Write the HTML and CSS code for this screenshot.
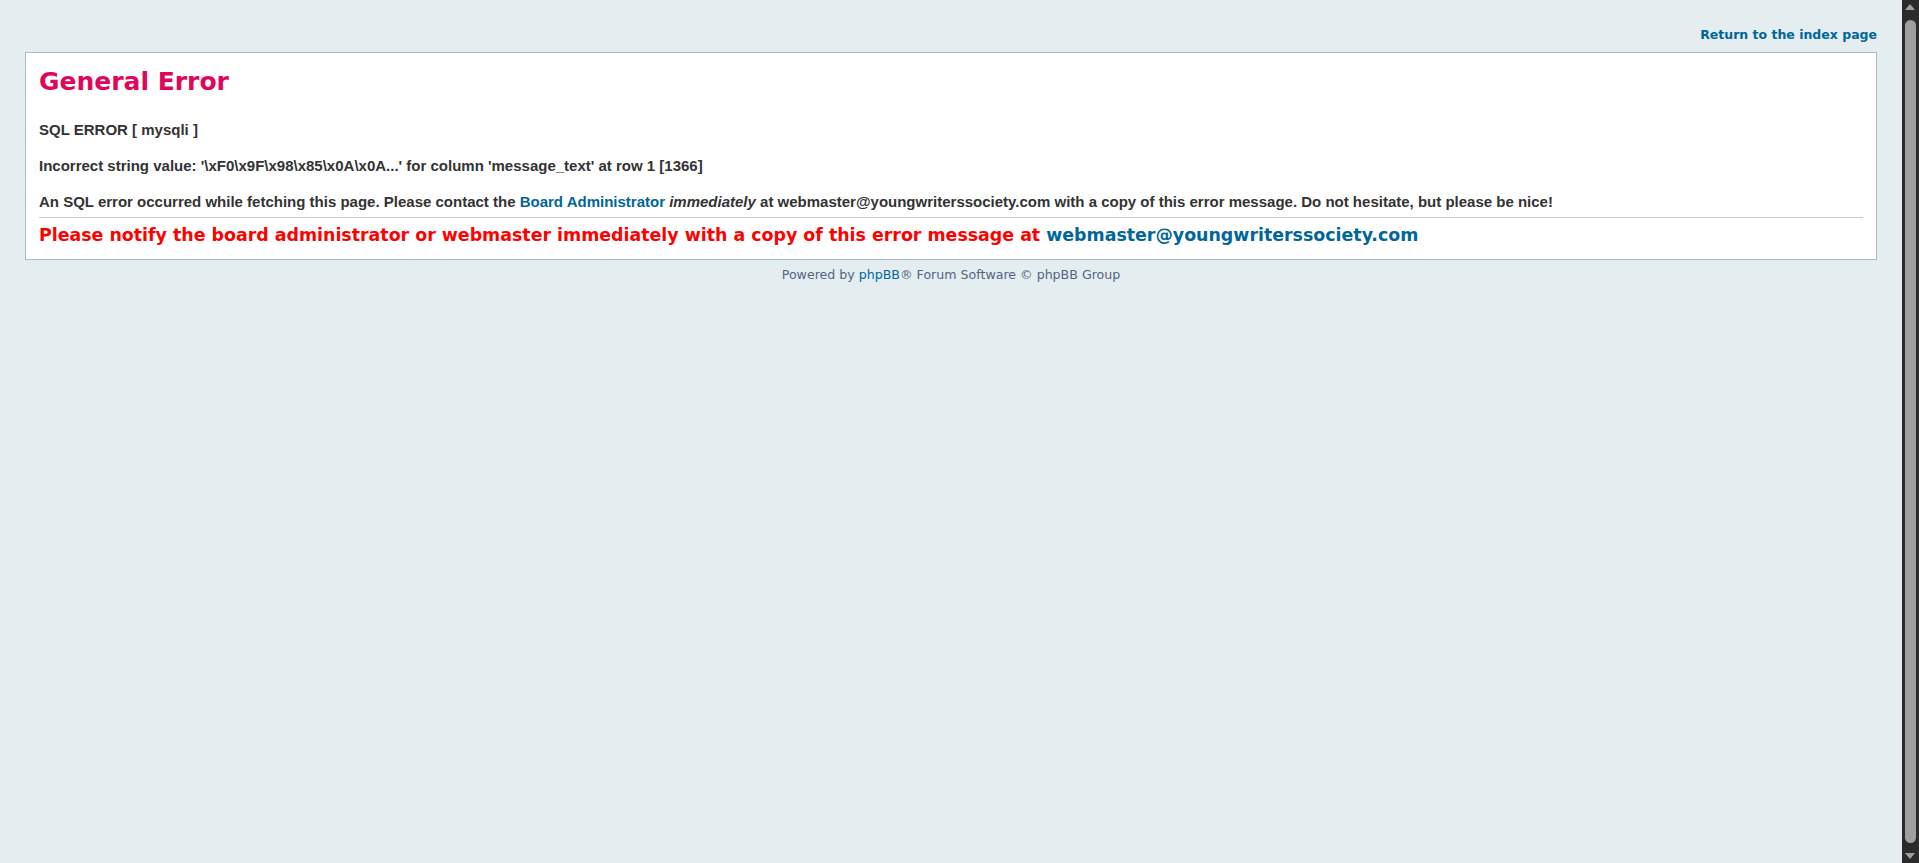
FILE: index.html
```html
<!DOCTYPE html>
<html lang="en">
<head>
  <meta charset="UTF-8" />
  <title>General Error</title>
  <link rel="stylesheet" href="styles.css">
</head>
<body id="errorpage">
  <div id="wrap">
    <div class="page-header">
      <a href="./index.php">Return to the index page</a>
    </div>

    <div class="panel">
      <div class="content">
        <h1>General Error</h1>
        <div class="error-text">
          SQL ERROR [ mysqli ]<br /><br />
          Incorrect string value: '\xF0\x9F\x98\x85\x0A\x0A...' for column 'message_text' at row 1 [1366]<br /><br />
          An SQL error occurred while fetching this page. Please contact the <a href="mailto:webmaster@youngwriterssociety.com">Board Administrator</a> <em>immediately</em> at webmaster@youngwriterssociety.com with a copy of this error message. Do not hesitate, but please be nice!
        </div>
        <p class="notify">Please notify the board administrator or webmaster immediately with a copy of this error message at <a href="mailto:webmaster@youngwriterssociety.com">webmaster@youngwriterssociety.com</a></p>
      </div>
    </div>

    <div class="page-footer">
      Powered by <a href="https://www.phpbb.com/">phpBB</a>&reg; Forum Software &copy; phpBB Group
    </div>
  </div>

  <!-- window scrollbar, as in the capture -->
  <div class="scrollbar" aria-hidden="true">
    <span class="sb-arrow sb-up"></span>
    <span class="sb-thumb"></span>
    <span class="sb-arrow sb-down"></span>
  </div>
</body>
</html>
```

FILE: styles.css
```css
* {
  margin: 0;
  padding: 0;
}

html {
  height: 100%;
  background-color: #E4EDF0;
}

body {
  font-family: "DejaVu Sans", Verdana, sans-serif;
  font-size: 12.5px;
  color: #536482;
  background: #E4EDF0;
  padding-right: 17px;
}

a:link, a:visited, a:active {
  color: #006699;
  text-decoration: none;
}

a:hover {
  color: #DD6900;
  text-decoration: underline;
}

#wrap {
  padding: 0 25px 19px 25px;
}

.page-header {
  text-align: right;
  height: 47px;
}

.page-header a {
  font-weight: bold;
  line-height: 70px;
}

.panel {
  margin: 5px 0;
  background-color: #FFFFFF;
  border: 1px solid #A9B8C2;
}

.content {
  padding: 13px 13px 12px 13px;
}

.content h1 {
  padding-top: 1px;
  font-size: 25px;
  line-height: 30px;
  color: #DF075C;
}

.error-text {
  margin-top: 24px;
  margin-bottom: 6px;
  padding-bottom: 6px;
  border-bottom: 1px solid #CCCCCC;
  color: #333333;
  font: bold 15px/18px "Liberation Sans", Arial, Helvetica, sans-serif;
  text-align: left;
}

.notify {
  font-size: 17.4px;
  line-height: 23px;
  font-weight: bold;
  color: #FF0000;
}

.page-footer {
  padding-top: 2px;
  font-size: 12.6px;
  text-align: center;
}

/* dark classic scrollbar */
.scrollbar {
  position: fixed;
  top: 0;
  right: 0;
  bottom: 0;
  width: 17px;
  background: #2b2b2b;
  display: flex;
  flex-direction: column;
  align-items: center;
}

.sb-arrow {
  flex: 0 0 17px;
  width: 17px;
  position: relative;
}

.sb-arrow::after {
  content: "";
  position: absolute;
  left: 3px;
  border-left: 5.5px solid transparent;
  border-right: 5.5px solid transparent;
}

.sb-up::after {
  top: 4px;
  border-bottom: 6px solid #9f9f9f;
}

.sb-down::after {
  bottom: 4px;
  border-top: 6px solid #9f9f9f;
}

.sb-thumb {
  flex: 1;
  width: 11px;
  margin: 3px 0;
  background: #9f9f9f;
  border-radius: 6px;
}
```
